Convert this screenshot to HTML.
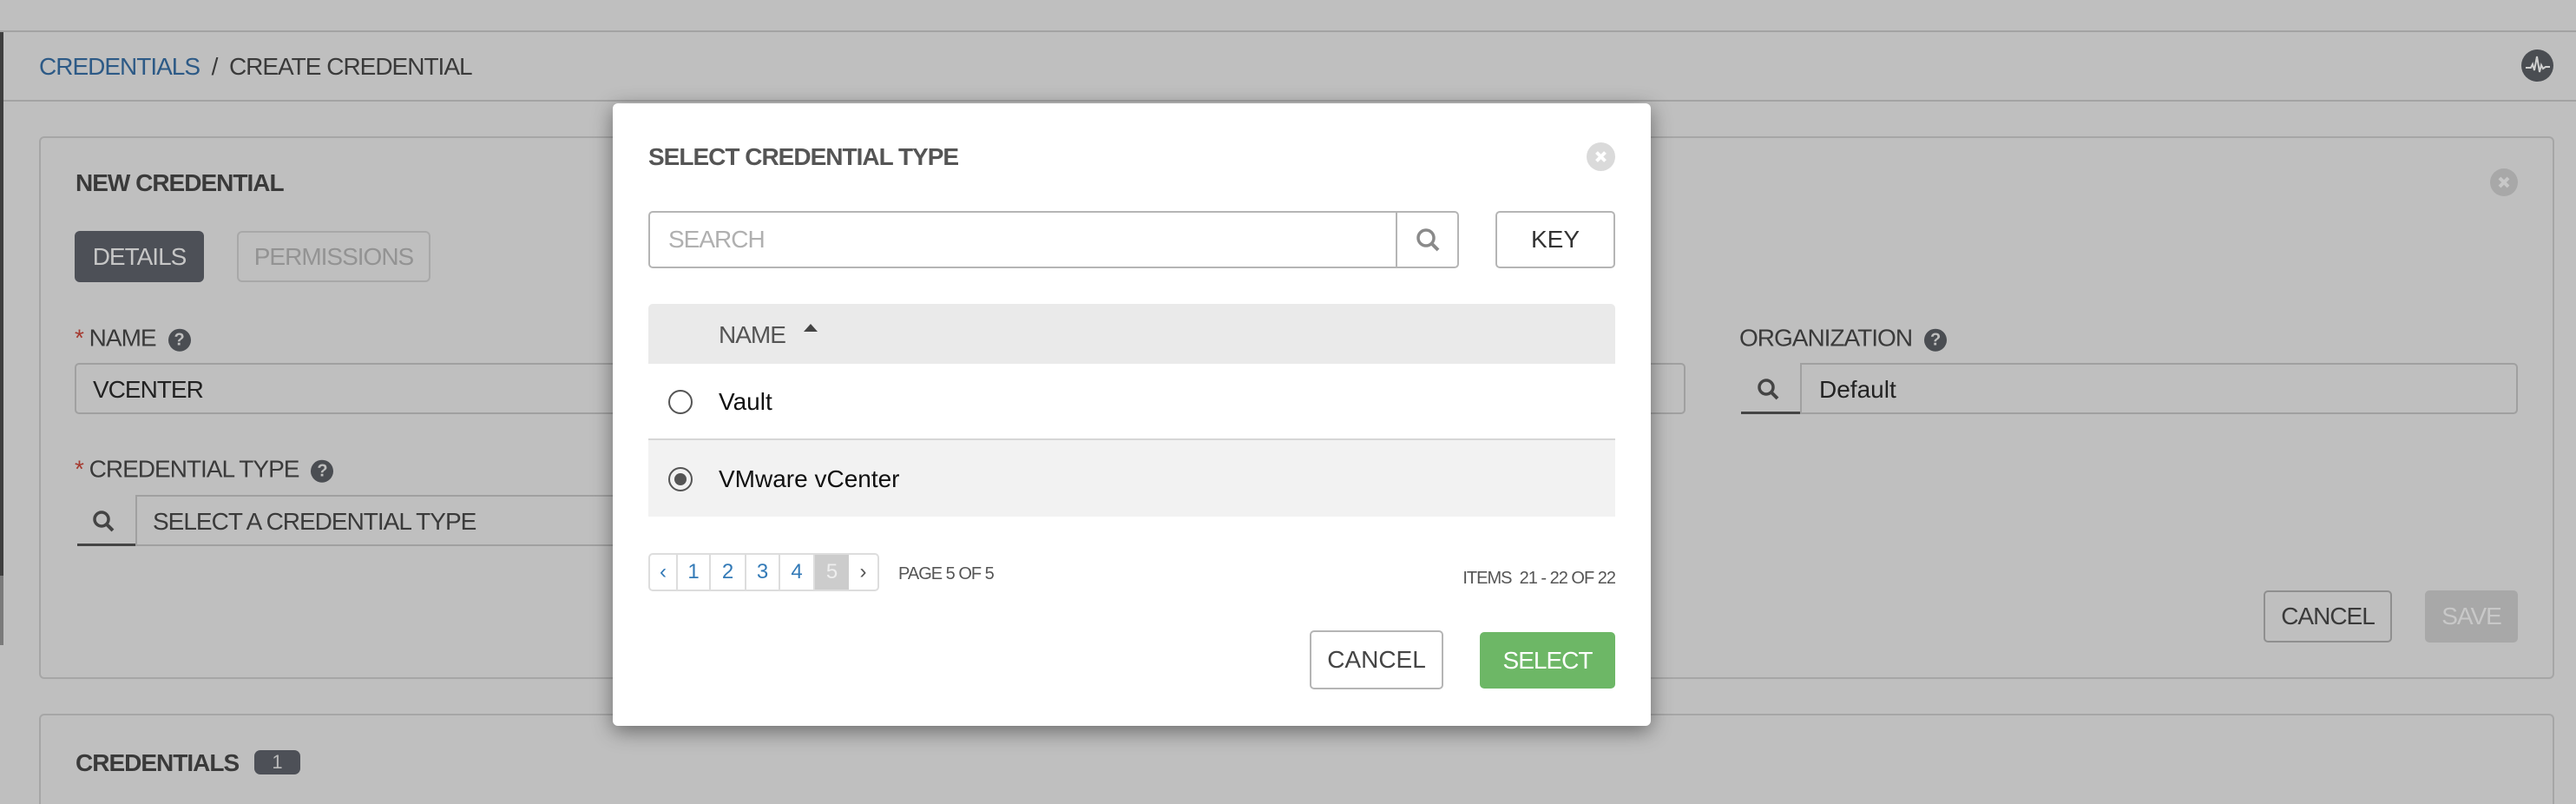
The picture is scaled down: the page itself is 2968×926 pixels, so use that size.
<!DOCTYPE html>
<html style="width:2968px;height:926px;overflow:hidden"><head><meta charset="utf-8"><style>
*{box-sizing:border-box;margin:0;padding:0}
body{width:2968px;height:926px;background:#bfbfbf;font-family:"Liberation Sans",sans-serif;position:relative;overflow:hidden;color:#3a3a3a}
.a{position:absolute}
.t{position:absolute;white-space:nowrap;font-size:28px;letter-spacing:-1px;line-height:1;transform:translateY(-50%)}
.panel{position:absolute;border:2px solid #a6a6a6;border-radius:6px}
.inp{position:absolute;border:2px solid #a0a0a0;border-radius:5px}
.q{display:inline-block;width:26px;height:26px;border-radius:50%;background:#4a4d52;color:#bfbfbf;font-size:20px;font-weight:bold;text-align:center;line-height:26px;letter-spacing:0;vertical-align:middle;margin-left:14px}
.star{color:#a53a30}
.btn{position:absolute;border:2px solid #8f8f8f;border-radius:5px;text-align:center}
</style></head><body>
<div class="a" style="left:0;top:35px;width:2968px;height:2px;background:#a3a3a3"></div>
<div class="a" style="left:0;top:115px;width:2968px;height:2px;background:#a3a3a3"></div>
<div class="a" style="left:0;top:37px;width:4px;height:626px;background:#3e3e3e"></div>
<div class="a" style="left:0;top:663px;width:4px;height:80px;background:#7a7a7a"></div>
<div class="t" style="left:45px;top:77px"><span style="color:#2d5a86">CREDENTIALS</span>&nbsp; / &nbsp;CREATE CREDENTIAL</div>
<svg class="a" style="left:2905px;top:57px" width="37" height="37" viewBox="0 0 37 37"><circle cx="18.5" cy="18.5" r="18.5" fill="#4a4d52"/><path d="M5 21h6l2-4 2 7 3-16 3 18 2-8 2 4 3-2h5" fill="none" stroke="#d0d0d0" stroke-width="2"/></svg>

<div class="panel" style="left:45px;top:157px;width:2898px;height:625px"></div>
<div class="t" style="left:87px;top:211px;font-weight:bold">NEW CREDENTIAL</div>
<svg class="a" style="left:2869px;top:194px" width="32" height="32"><circle cx="16" cy="16" r="16" fill="#a8a8a8"/><path d="M11 11l10 10M21 11l-10 10" stroke="#c8c8c8" stroke-width="4"/></svg>
<div class="a" style="left:86px;top:266px;width:149px;height:59px;background:#4d5057;border-radius:6px;color:#c6c6c6;font-size:28px;letter-spacing:-1px;text-align:center;line-height:59px">DETAILS</div>
<div class="a" style="left:273px;top:266px;width:223px;height:59px;border:2px solid #a8a8a8;border-radius:6px;color:#939393;font-size:28px;letter-spacing:-1px;text-align:center;line-height:55px">PERMISSIONS</div>
<div class="t" style="left:86px;top:390px"><span class="star">*</span> NAME<span class="q">?</span></div>
<div class="inp" style="left:86px;top:418px;width:1856px;height:59px"></div>
<div class="t" style="left:107px;top:449px;color:#222">VCENTER</div>
<div class="t" style="left:86px;top:541px"><span class="star">*</span> CREDENTIAL TYPE<span class="q">?</span></div>
<div class="inp" style="left:156px;top:570px;width:700px;height:59px;border-radius:0 5px 5px 0"></div>
<div class="a" style="left:89px;top:626px;width:67px;height:3px;background:#444"></div>
<svg class="a" style="left:106px;top:587px" width="28" height="28"><circle cx="11" cy="11" r="8" fill="none" stroke="#444" stroke-width="3.5"/><path d="M17 17l7 7" stroke="#444" stroke-width="4"/></svg>
<div class="t" style="left:176px;top:601px">SELECT A CREDENTIAL TYPE</div>
<div class="t" style="left:2004px;top:390px">ORGANIZATION<span class="q">?</span></div>
<div class="inp" style="left:2074px;top:418px;width:827px;height:59px;border-radius:0 5px 5px 0"></div>
<div class="a" style="left:2006px;top:474px;width:68px;height:3px;background:#444"></div>
<svg class="a" style="left:2024px;top:435px" width="28" height="28"><circle cx="11" cy="11" r="8" fill="none" stroke="#444" stroke-width="3.5"/><path d="M17 17l7 7" stroke="#444" stroke-width="4"/></svg>
<div class="t" style="left:2096px;top:449px;color:#222;letter-spacing:0">Default</div>
<div class="btn" style="left:2608px;top:680px;width:148px;height:60px;line-height:56px;font-size:28px;letter-spacing:-1px">CANCEL</div>
<div class="a" style="left:2794px;top:680px;width:107px;height:60px;background:#a8a8a8;border-radius:5px;color:#c8c8c8;font-size:28px;letter-spacing:-1px;text-align:center;line-height:60px">SAVE</div>

<div class="panel" style="left:45px;top:822px;width:2898px;height:110px;border-bottom:none;border-radius:6px 6px 0 0"></div>
<div class="t" style="left:87px;top:879px;font-weight:bold">CREDENTIALS</div>
<div class="a" style="left:293px;top:864px;width:53px;height:28px;background:#4d5057;border-radius:7px;color:#bbb;font-size:22px;text-align:center;line-height:28px">1</div>

<!-- modal -->
<div class="a" style="left:706px;top:119px;width:1196px;height:717px;background:#fff;border-radius:6px;box-shadow:0 6px 24px rgba(0,0,0,.45)"></div>
<div class="t" style="left:747px;top:181px;font-weight:bold;color:#555">SELECT CREDENTIAL TYPE</div>
<svg class="a" style="left:1828px;top:164px" width="33" height="33"><circle cx="16.5" cy="16.5" r="16.5" fill="#dadada"/><path d="M11.5 11.5l10 10M21.5 11.5l-10 10" stroke="#fff" stroke-width="4"/></svg>
<div class="a" style="left:747px;top:243px;width:934px;height:66px;border:2px solid #b5b5b5;border-radius:5px"></div>
<div class="a" style="left:1608px;top:243px;width:2px;height:66px;background:#b5b5b5"></div>
<div class="t" style="left:770px;top:276px;color:#b0b0b0">SEARCH</div>
<svg class="a" style="left:1630px;top:261px" width="32" height="32"><circle cx="13" cy="13" r="9" fill="none" stroke="#8a8a8a" stroke-width="3.5"/><path d="M20 20l7 7" stroke="#8a8a8a" stroke-width="4"/></svg>
<div class="btn" style="left:1723px;top:243px;width:138px;height:66px;line-height:62px;font-size:28px;border-color:#b5b5b5;color:#333">KEY</div>
<div class="a" style="left:747px;top:350px;width:1114px;height:69px;background:#eaeaea;border-radius:5px 5px 0 0"></div>
<div class="t" style="left:828px;top:386px;color:#555">NAME</div>
<div class="a" style="left:926px;top:373px;width:0;height:0;border-left:8px solid transparent;border-right:8px solid transparent;border-bottom:9px solid #444"></div>
<div class="a" style="left:747px;top:505px;width:1114px;height:2px;background:#d6d6d6"></div>
<div class="a" style="left:747px;top:507px;width:1114px;height:88px;background:#f2f2f2"></div>
<div class="a" style="left:770px;top:449px;width:28px;height:28px;border:2px solid #555;border-radius:50%"></div>
<div class="t" style="left:828px;top:463px;color:#111;letter-spacing:0">Vault</div>
<div class="a" style="left:770px;top:538px;width:28px;height:28px;border:2px solid #555;border-radius:50%"><div style="margin:5px;width:14px;height:14px;border-radius:50%;background:#555"></div></div>
<div class="t" style="left:828px;top:552px;color:#111;letter-spacing:0">VMware vCenter</div>
<div class="a" style="left:747px;top:637px;width:266px;height:44px;border:2px solid #ddd;border-radius:5px;display:flex;font-size:24px;color:#337ab7;line-height:40px;text-align:center">
<div style="width:32px;border-right:2px solid #ddd">‹</div><div style="width:38px;border-right:2px solid #ddd">1</div><div style="width:41px;border-right:2px solid #ddd">2</div><div style="width:39px;border-right:2px solid #ddd">3</div><div style="width:40px;border-right:2px solid #ddd">4</div><div style="width:39px;background:#ccc;color:#eee">5</div><div style="width:33px;color:#555">›</div></div>
<div class="t" style="left:1035px;top:661px;font-size:20px;color:#555">PAGE 5 OF 5</div>
<div class="t" style="right:1107px;top:666px;font-size:20px;color:#555">ITEMS&nbsp; 21 - 22 OF 22</div>
<div class="btn" style="left:1509px;top:726px;width:154px;height:68px;line-height:64px;font-size:28px;border-color:#b5b5b5;color:#444">CANCEL</div>
<div class="a" style="left:1705px;top:728px;width:156px;height:65px;background:#6db766;border-radius:5px;color:#fff;font-size:28px;letter-spacing:-1px;text-align:center;line-height:65px">SELECT</div>
</body></html>
